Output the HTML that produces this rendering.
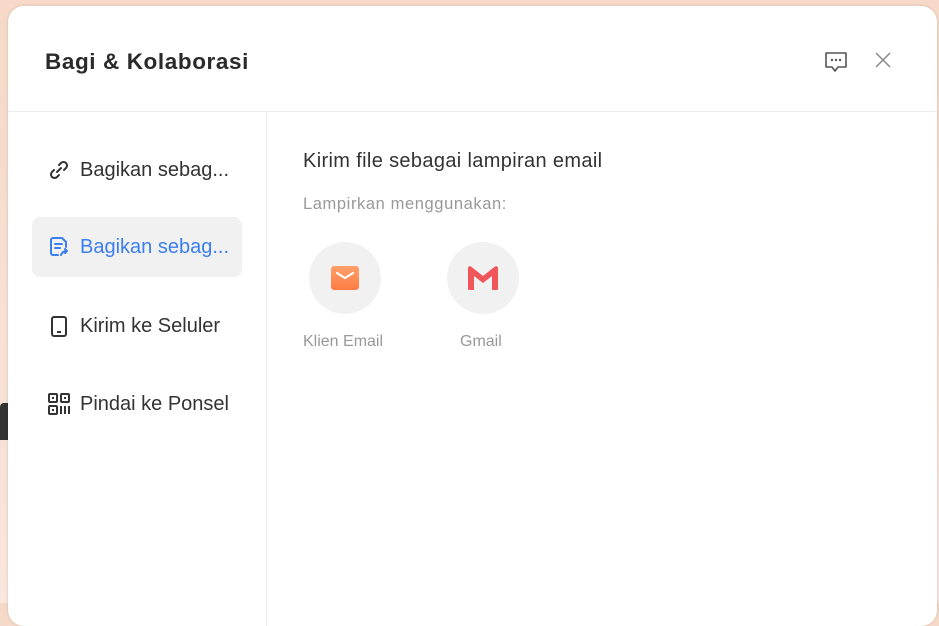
<!DOCTYPE html>
<html><head><meta charset="utf-8"><style>
*{margin:0;padding:0;box-sizing:border-box}
body{width:939px;height:603px;overflow:hidden;background:linear-gradient(180deg,#f6d9c8,#f9e6dc);font-family:"Liberation Sans","DejaVu Sans",sans-serif;position:relative}
.dlg{position:absolute;left:8px;top:6px;width:929px;height:620px;background:#fff;border-radius:16px;box-shadow:0 0 3px rgba(0,0,0,.15)}
.title{position:absolute;left:37px;top:43px;font-size:22.5px;font-weight:bold;color:#2a2a2a;letter-spacing:0.6px}
.hline{position:absolute;left:0;right:0;top:105px;height:1px;background:#ececec}
.vline{position:absolute;left:258px;top:106px;bottom:0;width:1px;background:#ececec}
.item{position:absolute;left:24px;width:210px;height:60px;border-radius:8px;font-size:20px;color:#333;display:flex;align-items:center;padding-left:16px}
.item svg{margin-right:10px}
.sel{background:#f1f1f1;color:#3b7ef0}
.h2{position:absolute;left:295px;top:144px;font-size:20px;color:#333;letter-spacing:0.35px}
.sub{position:absolute;left:295px;top:189px;font-size:16.5px;color:#999;letter-spacing:0.6px}
.circ{position:absolute;top:236px;width:72px;height:72px;border-radius:50%;background:#f1f1f1;display:flex;align-items:center;justify-content:center}
.lbl{position:absolute;top:327px;font-size:16px;color:#999}
</style></head><body>
<div style="position:absolute;left:0;top:403px;width:8px;height:37px;background:#333;border-radius:4px 0 0 0"></div>
<div class="dlg">
<div class="title">Bagi &amp; Kolaborasi</div>
<svg style="position:absolute;left:815px;top:44px" width="26" height="24" viewBox="0 0 26 24"><path d="M3 3h20v14h-8l-3 4-3-4H3z" fill="none" stroke="#555" stroke-width="1.6" stroke-linejoin="round"/><circle cx="9" cy="10" r="1.2" fill="#555"/><circle cx="13" cy="10" r="1.2" fill="#555"/><circle cx="17" cy="10" r="1.2" fill="#555"/></svg>
<svg style="position:absolute;left:866px;top:45px" width="18" height="18" viewBox="0 0 18 18"><path d="M2 2l14 14M16 2L2 16" stroke="#888" stroke-width="1.5"/></svg>
<div class="hline"></div><div class="vline"></div>
<div class="item" style="top:134px"><svg width="22" height="22" viewBox="0 0 22 22" fill="none" stroke="#333" stroke-width="2" stroke-linecap="round"><path d="M9 13l4-4"/><path d="M11 6l2-2a3.5 3.5 0 015 5l-2 2"/><path d="M11 16l-2 2a3.5 3.5 0 01-5-5l2-2"/></svg>Bagikan sebag...</div>
<div class="item sel" style="top:211px"><svg width="22" height="22" viewBox="0 0 22 22" fill="none" stroke="#3b7ef0" stroke-width="2" stroke-linecap="round" stroke-linejoin="round"><path d="M10 19H5a2 2 0 01-2-2V4a2 2 0 012-2h9l4 4v5"/><path d="M7 8h7M7 12h5"/><path d="M13 19c1-3 3-4 6-4M17 13l2 2-2 2"/></svg>Bagikan sebag...</div>
<div class="item" style="top:290px"><svg width="22" height="22" viewBox="0 0 22 22" fill="none" stroke="#333" stroke-width="2"><rect x="4" y="2" width="14" height="19" rx="2"/><path d="M9 17h4"/></svg>Kirim ke Seluler</div>
<div class="item" style="top:368px"><svg width="22" height="22" viewBox="0 0 22 22" fill="none" stroke="#333" stroke-width="2"><rect x="1" y="1" width="8" height="8" rx="1"/><rect x="13" y="1" width="8" height="8" rx="1"/><rect x="1" y="13" width="8" height="8" rx="1"/><path d="M13 13v8M17 13v8M21 13v8"/><rect x="4" y="4" width="2" height="2" fill="#333" stroke="none"/><rect x="16" y="4" width="2" height="2" fill="#333" stroke="none"/><rect x="4" y="16" width="2" height="2" fill="#333" stroke="none"/></svg>Pindai ke Ponsel</div>
<div class="h2">Kirim file sebagai lampiran email</div>
<div class="sub">Lampirkan menggunakan:</div>
<div class="circ" style="left:301px"><svg width="30" height="26" viewBox="0 0 30 26"><defs><linearGradient id="g1" x1="0" y1="0" x2="0" y2="1"><stop offset="0" stop-color="#ff9f6a"/><stop offset="1" stop-color="#ff7c45"/></linearGradient></defs><rect x="1" y="1" width="28" height="24" rx="3" fill="url(#g1)"/><path d="M7 8l8 5 8-5" fill="none" stroke="#fff" stroke-width="2.2" stroke-linecap="round" stroke-linejoin="round"/></svg></div>
<div class="circ" style="left:439px"><svg width="32" height="26" viewBox="0 0 32 26"><path d="M1 3a2 2 0 013-1.5L16 11 28 1.5A2 2 0 0131 3v21a1 1 0 01-1 1h-5V11l-9 7-9-7v14H2a1 1 0 01-1-1z" fill="#f0555a"/></svg></div>
<div class="lbl" style="left:295px">Klien Email</div>
<div class="lbl" style="left:452px">Gmail</div>
</div>
</body></html>
